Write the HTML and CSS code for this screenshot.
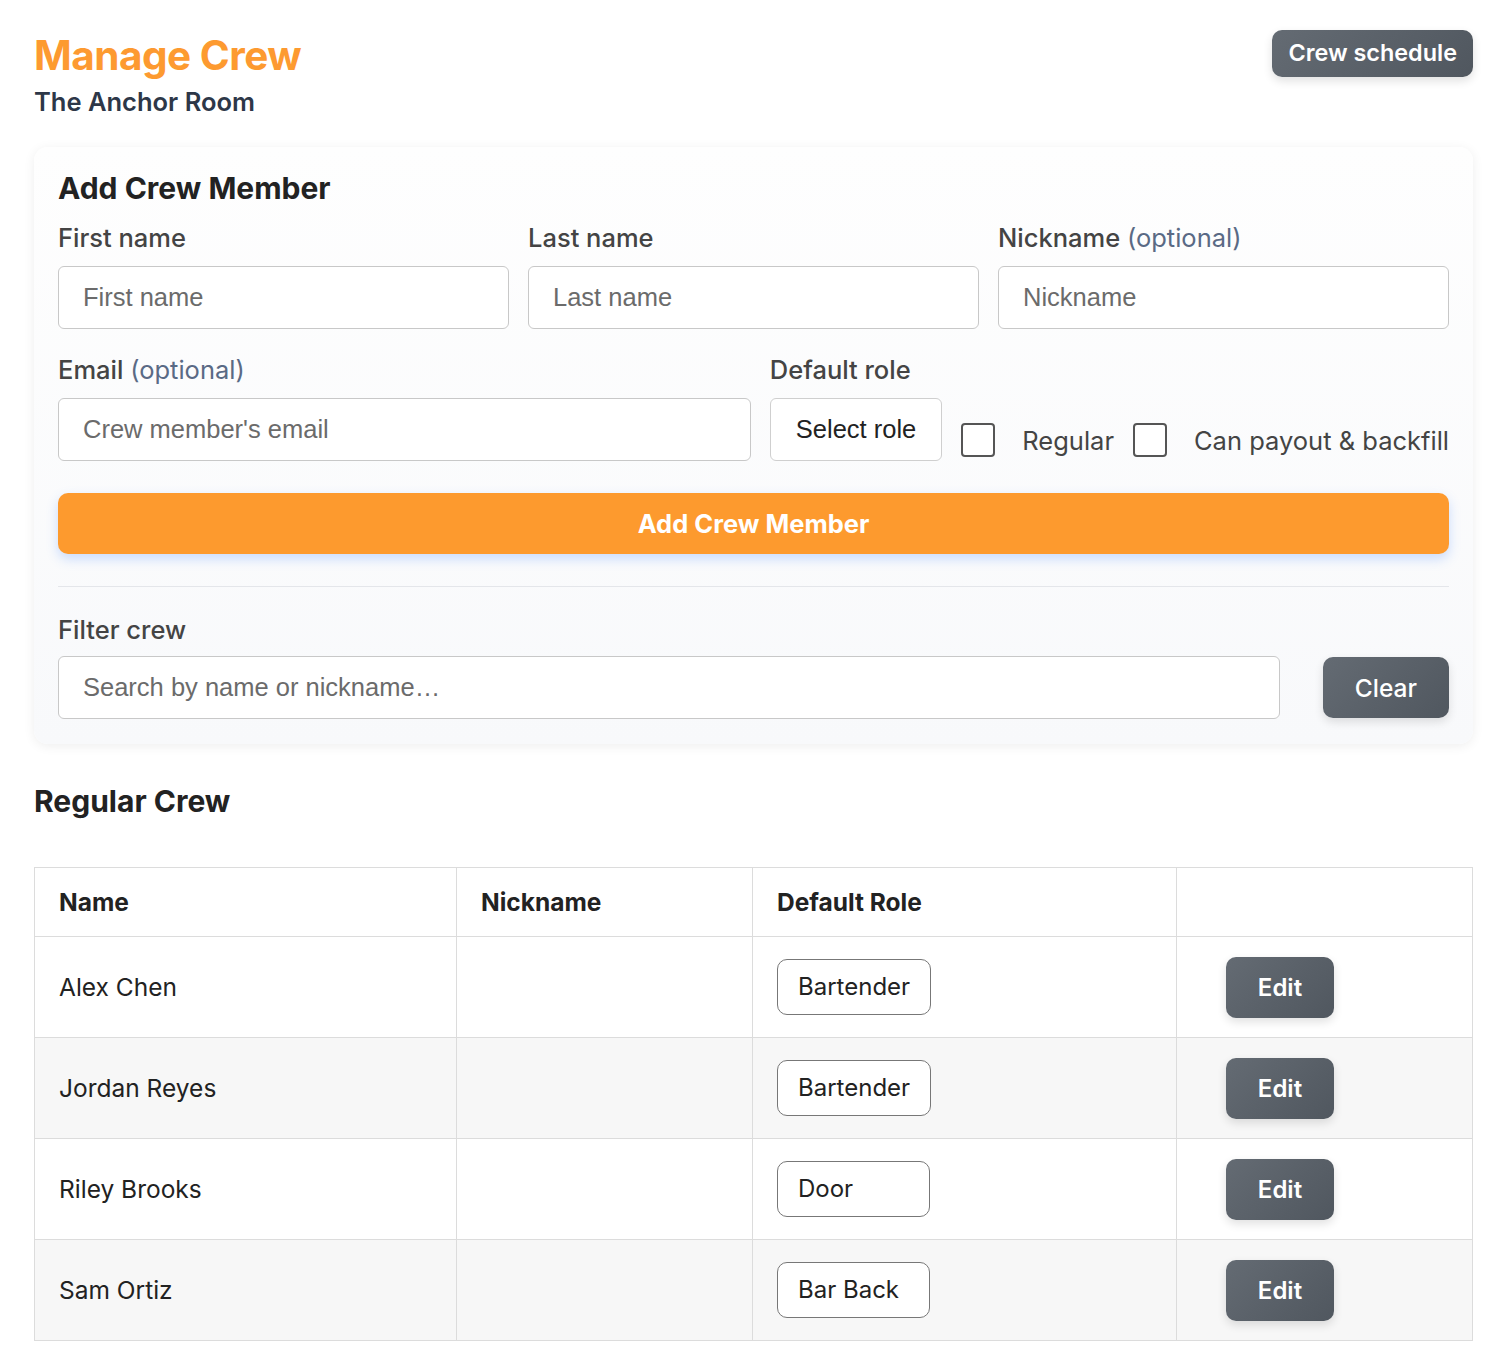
FILE: index.html
```html
<!DOCTYPE html>
<html lang="en">
<head>
    <meta charset="UTF-8">
    <meta name="viewport" content="width=device-width, initial-scale=1.0">
    <title>Manage Crew</title>
    <link rel="stylesheet" href="styles.css">
</head>
<body>
    <div class="page">
        <!-- Header -->
        <div class="page-header">
            <div>
                <h1>Manage Crew</h1>
                <div class="venue">The Anchor Room</div>
            </div>
            <a class="btn-dark btn-schedule" href="#">Crew schedule</a>
        </div>

        <!-- Add crew card -->
        <div class="card">
            <h2>Add Crew Member</h2>
            <form id="addCrewForm">
                <div class="row row-names">
                    <div class="form-group">
                        <label for="firstName">First name</label>
                        <input type="text" id="firstName" placeholder="First name">
                    </div>
                    <div class="form-group">
                        <label for="lastName">Last name</label>
                        <input type="text" id="lastName" placeholder="Last name">
                    </div>
                    <div class="form-group">
                        <label for="nickname">Nickname <span class="optional">(optional)</span></label>
                        <input type="text" id="nickname" placeholder="Nickname">
                    </div>
                </div>
                <div class="row row-details">
                    <div class="form-group email-group">
                        <label for="email">Email <span class="optional">(optional)</span></label>
                        <input type="text" id="email" placeholder="Crew member's email">
                    </div>
                    <div class="form-group">
                        <label for="role">Default role</label>
                        <button type="button" class="select-role" id="role">Select role</button>
                    </div>
                    <label class="check"><span class="box"></span>Regular</label>
                    <label class="check"><span class="box"></span>Can payout &amp; backfill</label>
                </div>
                <button type="submit" class="btn-add">Add Crew Member</button>
            </form>
            <hr>
            <div class="filter">
                <label for="filter">Filter crew</label>
                <div class="filter-row">
                    <input type="text" id="filter" placeholder="Search by name or nickname…">
                    <button type="button" class="btn-dark btn-clear">Clear</button>
                </div>
            </div>
        </div>

        <h2 class="section-title">Regular Crew</h2>

        <table class="crew-table">
            <thead>
                <tr>
                    <th class="col-name">Name</th>
                    <th class="col-nick">Nickname</th>
                    <th class="col-role">Default Role</th>
                    <th class="col-action"></th>
                </tr>
            </thead>
            <tbody>
                <tr>
                    <td>Alex Chen</td>
                    <td></td>
                    <td><span class="role-pill">Bartender</span></td>
                    <td><button class="btn-dark btn-edit">Edit</button></td>
                </tr>
                <tr>
                    <td>Jordan Reyes</td>
                    <td></td>
                    <td><span class="role-pill">Bartender</span></td>
                    <td><button class="btn-dark btn-edit">Edit</button></td>
                </tr>
                <tr>
                    <td>Riley Brooks</td>
                    <td></td>
                    <td><span class="role-pill">Door</span></td>
                    <td><button class="btn-dark btn-edit">Edit</button></td>
                </tr>
                <tr>
                    <td>Sam Ortiz</td>
                    <td></td>
                    <td><span class="role-pill">Bar Back</span></td>
                    <td><button class="btn-dark btn-edit">Edit</button></td>
                </tr>
            </tbody>
        </table>
    </div>
</body>
</html>
```

FILE: styles.css
```css
/* General styles */
body {
    font-family: Inter, "Liberation Sans", sans-serif;
    margin: 0;
    padding: 0;
    background: #fff;
    color: #222;
}
.page {
    padding: 30px 35px 26px 34px;
}
.page-header {
    display: flex;
    justify-content: space-between;
    align-items: flex-start;
}
h1 {
    margin: 2px 0 0;
    font-size: 40.5px;
    font-weight: 700;
    color: #fd9a30;
    letter-spacing: -0.5px;
    line-height: 48px;
}
.venue {
    margin-top: 6px;
    font-size: 25.5px;
    font-weight: 600;
    color: #2d3748;
}

/* Buttons */
.btn-dark {
    background: linear-gradient(135deg, #646b73, #50575f);
    color: #fff;
    border: none;
    border-radius: 10px;
    font-family: inherit;
    cursor: pointer;
    box-shadow: 0 4px 10px rgba(0, 0, 0, 0.12);
    text-decoration: none;
}
.btn-schedule {
    display: block;
    padding: 9px 16px 10px;
    font-size: 23.4px;
    font-weight: 600;
    line-height: 28px;
}

/* Card */
.card {
    margin-top: 30px;
    background: linear-gradient(180deg, #fefefe, #f8f9fb);
    border-radius: 14px;
    padding: 23px 24px 25px;
    box-shadow: 0 2px 12px rgba(0, 0, 0, 0.07);
}
.card h2 {
    margin: 0 0 16px;
    font-size: 30px;
    font-weight: 700;
    line-height: 36px;
}
.row {
    display: flex;
    gap: 19px;
}
.row-names .form-group {
    flex: 1;
}
.row-details {
    margin-top: 25px;
    align-items: flex-end;
}
.email-group {
    flex: 1;
}
.form-group label,
.filter label {
    display: block;
    font-size: 25.5px;
    font-weight: 500;
    color: #444;
    line-height: 31px;
    margin-bottom: 13px;
}
.optional {
    color: #5a6a85;
    font-weight: 400;
}
input[type="text"] {
    width: 100%;
    height: 63px;
    box-sizing: border-box;
    padding: 0 24px;
    border: 1px solid #c8c8c8;
    border-radius: 6px;
    font-family: "Liberation Sans", Arial, sans-serif;
    font-size: 25.5px;
    color: #222;
    background: #fff;
}
input::placeholder {
    color: #6b6b6b;
}
.select-role {
    height: 63px;
    padding: 0 25px;
    border: 1px solid #cfcfcf;
    border-radius: 6px;
    background: #fff;
    font-family: "Liberation Sans", Arial, sans-serif;
    font-size: 25.5px;
    color: #222;
}
.check {
    display: flex;
    align-items: center;
    font-size: 25.5px;
    color: #444;
    height: 42px;
}
.check .box {
    width: 34px;
    height: 34px;
    box-sizing: border-box;
    border: 2px solid #555;
    border-radius: 4px;
    background: #fff;
    margin-right: 27px;
}
.btn-add {
    display: block;
    width: 100%;
    margin-top: 32px;
    height: 61px;
    border: none;
    border-radius: 10px;
    background: #fd9a2e;
    color: #fff;
    font-family: inherit;
    font-size: 25.5px;
    font-weight: 700;
    box-shadow: 0 5px 12px rgba(80, 140, 255, 0.28);
    cursor: pointer;
}
hr {
    border: none;
    border-top: 1px solid #e4e6ea;
    margin: 32px 0 27px;
}
.filter label {
    margin-bottom: 11px;
}
.filter-row {
    display: flex;
    align-items: center;
    gap: 43px;
}
.filter-row input {
    flex: 1;
}
.btn-clear {
    height: 61px;
    padding: 0 32px;
    font-size: 24.5px;
    font-weight: 500;
}

/* Table */
.section-title {
    margin: 39px 0 48px;
    font-size: 30px;
    font-weight: 700;
    line-height: 36px;
}
.crew-table {
    width: 100%;
    border-collapse: collapse;
    font-size: 24.5px;
}
.crew-table th,
.crew-table td {
    border: 1px solid #dcdcdc;
    padding: 0 24px;
    text-align: left;
}
.crew-table th {
    height: 68px;
    font-weight: 700;
    background: #fff;
}
.crew-table td {
    height: 100px;
}
.crew-table tbody tr:nth-child(even) td {
    background: #f7f7f7;
}
.col-name { width: 373px; }
.col-nick { width: 247px; }
.col-role { width: 375px; }
.role-pill {
    display: inline-block;
    min-width: 111px;
    padding: 13px 20px;
    border: 1px solid #777;
    border-radius: 10px;
    background: #fff;
    font-size: 24px;
    line-height: 28px;
}
.btn-edit {
    margin-left: 25px;
    width: 108px;
    height: 61px;
    font-size: 24px;
    font-weight: 600;
}
```
